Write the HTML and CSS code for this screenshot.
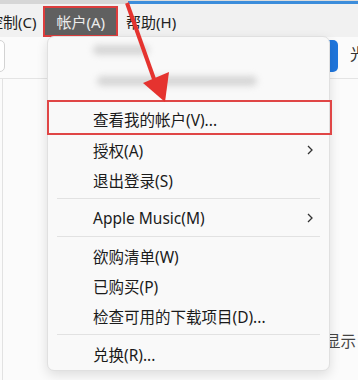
FILE: index.html
```html
<!DOCTYPE html>
<html lang="zh-CN">
<head>
  <meta charset="UTF-8">
  <meta name="viewport" content="width=device-width, initial-scale=1.0">
  <title>帐户菜单</title>
  <link rel="stylesheet" href="styles.css">
</head>
<body>

<div class="window">
  <!-- barre du haut -->
  <div class="topstrip">
    <span class="strip-gray"></span>
    <span class="strip-blue"></span>
  </div>

  <!-- MENU BAR -->
  <nav class="menubar">
    <span class="menubar-item cut">控制(C)</span>
    <span class="menubar-item active">帐户(A)</span>
    <span class="menubar-item">帮助(H)</span>
  </nav>

  <!-- contenu derrière le menu -->
  <div class="content">
    <div class="toolbar">
      <div class="search"></div>
      <div class="toolbar-right">
        <span class="btn-blue"></span>
        <span class="toolbar-label">光</span>
      </div>
    </div>
    <div class="main">
      <div class="pane">
        <span class="hint">显示</span>
      </div>
    </div>
  </div>

  <!-- MENU DÉROULANT -->
  <div class="dropdown">
    <div class="dd-head first"><span class="blur blur-short"></span></div>
    <div class="dd-head second"><span class="blur blur-long"></span></div>

    <div class="dd-item marked">查看我的帐户(V)...</div>
    <div class="dd-item">授权(A)
      <svg class="chevron" viewBox="0 0 6 10"><path d="M1 1 L5 5 L1 9"/></svg>
    </div>
    <div class="dd-item">退出登录(S)</div>

    <div class="dd-sep"></div>
    <div class="dd-item">Apple Music(M)
      <svg class="chevron" viewBox="0 0 6 10"><path d="M1 1 L5 5 L1 9"/></svg>
    </div>

    <div class="dd-sep"></div>
    <div class="dd-item">欲购清单(W)</div>
    <div class="dd-item">已购买(P)</div>
    <div class="dd-item">检查可用的下载项目(D)...</div>

    <div class="dd-sep"></div>
    <div class="dd-item">兑换(R)...</div>
  </div>

  <!-- flèche rouge -->
  <svg class="arrow" width="358" height="380" viewBox="0 0 358 380">
    <line x1="127" y1="3" x2="154" y2="79" />
    <polygon points="143,83 169,72 165,102" />
  </svg>
</div>

</body>
</html>
```

FILE: styles.css
```css
/* RESET & BASE */
* {
  box-sizing: border-box;
}
body {
  margin: 0;
  padding: 0;
  background: #fbfbfb;
  color: #1b1b1b;
  font-family: "Noto Sans", "Noto Sans CJK SC", sans-serif;
}

.window {
  position: relative;
  width: 358px;
  height: 380px;
  overflow: hidden;
  background: #fbfbfb;
}

/* TOP STRIP */
.topstrip {
  display: flex;
  height: 4px;
}
.strip-gray {
  width: 128px;
  background: #d6d6d6;
}
.strip-blue {
  flex: 1;
  background: linear-gradient(#dcdcdc 0, #dcdcdc 1px, #3c8ddb 1px);
}

/* MENU BAR */
.menubar {
  display: flex;
  gap: 8px;
  height: 33px;
  padding-top: 2px;
  background: #f1f1f1;
  font-size: 15px;
}
.menubar-item {
  display: flex;
  align-items: center;
  white-space: nowrap;
  color: #222;
}
.menubar-item.cut {
  margin-left: -12px;
  margin-right: -1px;
}
.menubar-item.active {
  padding: 0 11px 0 11px;
  background: #606060;
  color: #ececec;
  border: 2px solid #dd3d3d;
}

/* CONTENT */
.toolbar {
  display: flex;
  justify-content: space-between;
  height: 42px;
  padding-top: 3px;
  border-bottom: 1px solid #e4e4e4;
}
.search {
  width: 6px;
  height: 32px;
  margin-left: -1px;
  background: #fff;
  border: 1px solid #d3d3d3;
  border-radius: 0 5px 5px 0;
}
.toolbar-right {
  display: flex;
  align-items: flex-start;
  gap: 12px;
  margin-right: -8px;
}
.btn-blue {
  width: 40px;
  height: 32px;
  background: #1f76dd;
  border-radius: 5px;
}
.toolbar-label {
  font-size: 16px;
  line-height: 28px;
  color: #333;
}

.main {
  height: 301px;
  margin-left: 2px;
  border-left: 1px solid #e2e2e2;
}
.pane {
  display: flex;
  justify-content: flex-end;
  align-items: flex-end;
  height: 100%;
  padding: 0 0 29px;
}
.hint {
  font-size: 15.5px;
  line-height: 20px;
  color: #444;
  margin-right: 2px;
}

/* DROPDOWN */
.dropdown {
  position: absolute;
  left: 47px;
  top: 36px;
  width: 283px;
  padding-bottom: 1px;
  background: #f9f9f9;
  border: 1px solid #e0e0e0;
  border-radius: 7px;
  box-shadow: 0 4px 12px rgba(0,0,0,0.12);
  font-size: 15.5px;
}
.dd-head {
  display: flex;
  align-items: center;
}
.dd-head.first { height: 26px; padding-left: 45px; }
.dd-head.second { height: 36px; padding-left: 49px; }
.blur {
  display: block;
  height: 10px;
  background: #d6d6d6;
  border-radius: 5px;
  filter: blur(3px);
}
.blur-short { width: 56px; }
.blur-long { width: 160px; }

.dd-item {
  display: flex;
  align-items: center;
  justify-content: space-between;
  height: 30px;
  padding: 0 16px 0 45px;
  white-space: nowrap;
}
.dd-item.marked {
  height: 35px;
  margin: 1px -3px 0 -1px;
  padding-left: 44px;
  padding-top: 3px;
  border: 2px solid #e04646;
}
.chevron {
  width: 6px;
  height: 10px;
  fill: none;
  stroke: #333;
  stroke-width: 1.3;
}
.dd-sep {
  height: 8px;
  margin: 0 9px;
  background: linear-gradient(transparent 3px, #e2e2e2 3px, #e2e2e2 4px, transparent 4px);
}

/* ARROW */
.arrow {
  position: absolute;
  left: 0;
  top: 0;
  pointer-events: none;
}
.arrow line {
  stroke: #e5332f;
  stroke-width: 4;
}
.arrow polygon {
  fill: #e5332f;
}
```
